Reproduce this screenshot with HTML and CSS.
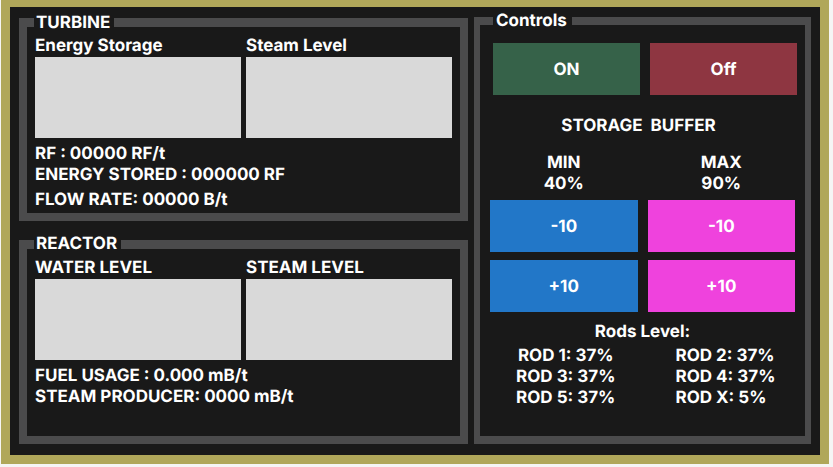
FILE: index.html
```html
<!DOCTYPE html>
<html lang="en">
<head>
<meta charset="utf-8">
<meta name="viewport" content="width=device-width, initial-scale=1">
<title>Reactor Control</title>
<link rel="stylesheet" href="styles.css">
</head>
<body>
<main class="console">
  <div class="monitors">
    <fieldset class="panel turbine">
      <legend>TURBINE</legend>
      <div class="gauges">
        <section>
          <h2>Energy Storage</h2>
          <div class="gauge"></div>
        </section>
        <section>
          <h2>Steam Level</h2>
          <div class="gauge"></div>
        </section>
      </div>
      <div class="readings">
        <p>RF : 00000 RF/t</p>
        <p>ENERGY STORED : 000000 RF</p>
        <p class="spaced">FLOW RATE: 00000 B/t</p>
      </div>
    </fieldset>
    <fieldset class="panel">
      <legend>REACTOR</legend>
      <div class="gauges">
        <section>
          <h2>WATER LEVEL</h2>
          <div class="gauge"></div>
        </section>
        <section>
          <h2>STEAM LEVEL</h2>
          <div class="gauge"></div>
        </section>
      </div>
      <div class="readings">
        <p>FUEL USAGE : 0.000 mB/t</p>
        <p>STEAM PRODUCER: 0000 mB/t</p>
      </div>
    </fieldset>
  </div>
  <fieldset class="panel controls">
    <legend>Controls</legend>
    <div class="power">
      <button type="button" class="on">ON</button>
      <button type="button" class="off">Off</button>
    </div>
    <h2 class="buffer-title">STORAGE  BUFFER</h2>
    <div class="buffer">
      <p>MIN<br>40%</p>
      <p>MAX<br>90%</p>
      <button type="button" class="min-step" aria-label="Minimum -10">-10</button>
      <button type="button" class="max-step" aria-label="Maximum -10">-10</button>
      <button type="button" class="min-step" aria-label="Minimum +10">+10</button>
      <button type="button" class="max-step" aria-label="Maximum +10">+10</button>
    </div>
    <h2 class="rods-title">Rods Level:</h2>
    <div class="rods">
      <div class="rods-odd">
        <p>ROD 1: 37%</p>
        <p>ROD 3: 37%</p>
        <p>ROD 5: 37%</p>
      </div>
      <div class="rods-even">
        <p>ROD 2: 37%</p>
        <p>ROD 4: 37%</p>
        <p>ROD X: 5%</p>
      </div>
    </div>
  </fieldset>
</main>
</body>
</html>
```
FILE: styles.css
```css
* {
  box-sizing: border-box;
}

body {
  margin: 0;
  background: #f5f5f5;
  color: #fff;
  font: 700 17px/21px Inter, "Liberation Sans", sans-serif;
  text-rendering: geometricPrecision;
}

h2,
p {
  margin: 0;
  font: inherit;
}

.console {
  display: grid;
  grid-template-columns: 449fr 337fr;
  gap: 6px;
  min-height: calc(100vh - 3px);
  margin: 0 4px 3px 1px;
  padding: 5px 9px 11px;
  border: 9px solid #b0a75a;
  border-top-width: 7px;
  background: #191919;
}

.monitors {
  display: grid;
  grid-template-rows: 209fr 210fr;
  gap: 13px;
}

.panel {
  min-width: 0;
  margin: 0;
  padding: 4px 8px 0;
  border: 8px solid #4b4b4c;
  border-top-width: 9px;
}

.panel legend {
  height: 20px;
  margin-left: -1px;
  padding: 0 4px 0 2px;
  line-height: 20px;
}

.turbine legend {
  line-height: 22px;
}

.gauges {
  display: grid;
  grid-template-columns: 1fr 1fr;
  gap: 5px;
}

.gauge {
  height: 81px;
  background: #d9d9d9;
}

.readings {
  padding-top: 6px;
}

.spaced {
  padding-top: 4px;
}

.controls {
  padding: 13px 10px 0;
  border-width: 8px 6px;
}

.controls legend {
  height: 18px;
  margin-left: 3px;
  padding: 0 5px 0 3px;
  line-height: 18px;
}

button {
  height: 52px;
  padding: 2px 0 0;
  border: 0;
  color: inherit;
  font: inherit;
  text-rendering: inherit;
}

.power,
.buffer {
  display: grid;
  grid-template-columns: 1fr 1fr;
  column-gap: 10px;
}

.power {
  margin: 0 -2px 0 3px;
}

.on {
  background: #366249;
}

.off {
  background: #8e3641;
}

.buffer-title {
  margin: 21px 0 16px;
  padding-right: 8px;
  text-align: center;
  white-space: pre;
}

.buffer {
  row-gap: 8px;
  text-align: center;
}

.buffer p {
  margin-bottom: -3px;
}

.min-step {
  background: #2277c8;
}

.max-step {
  background: #ef42dd;
}

.rods-title {
  margin: 10px 0 3px;
  text-align: center;
}

.rods {
  display: grid;
  grid-template-columns: 1fr 1fr;
  gap: 10px;
}

.rods-odd {
  padding-left: 4px;
  text-align: center;
}

.rods-even {
  padding-left: 28px;
}
```
